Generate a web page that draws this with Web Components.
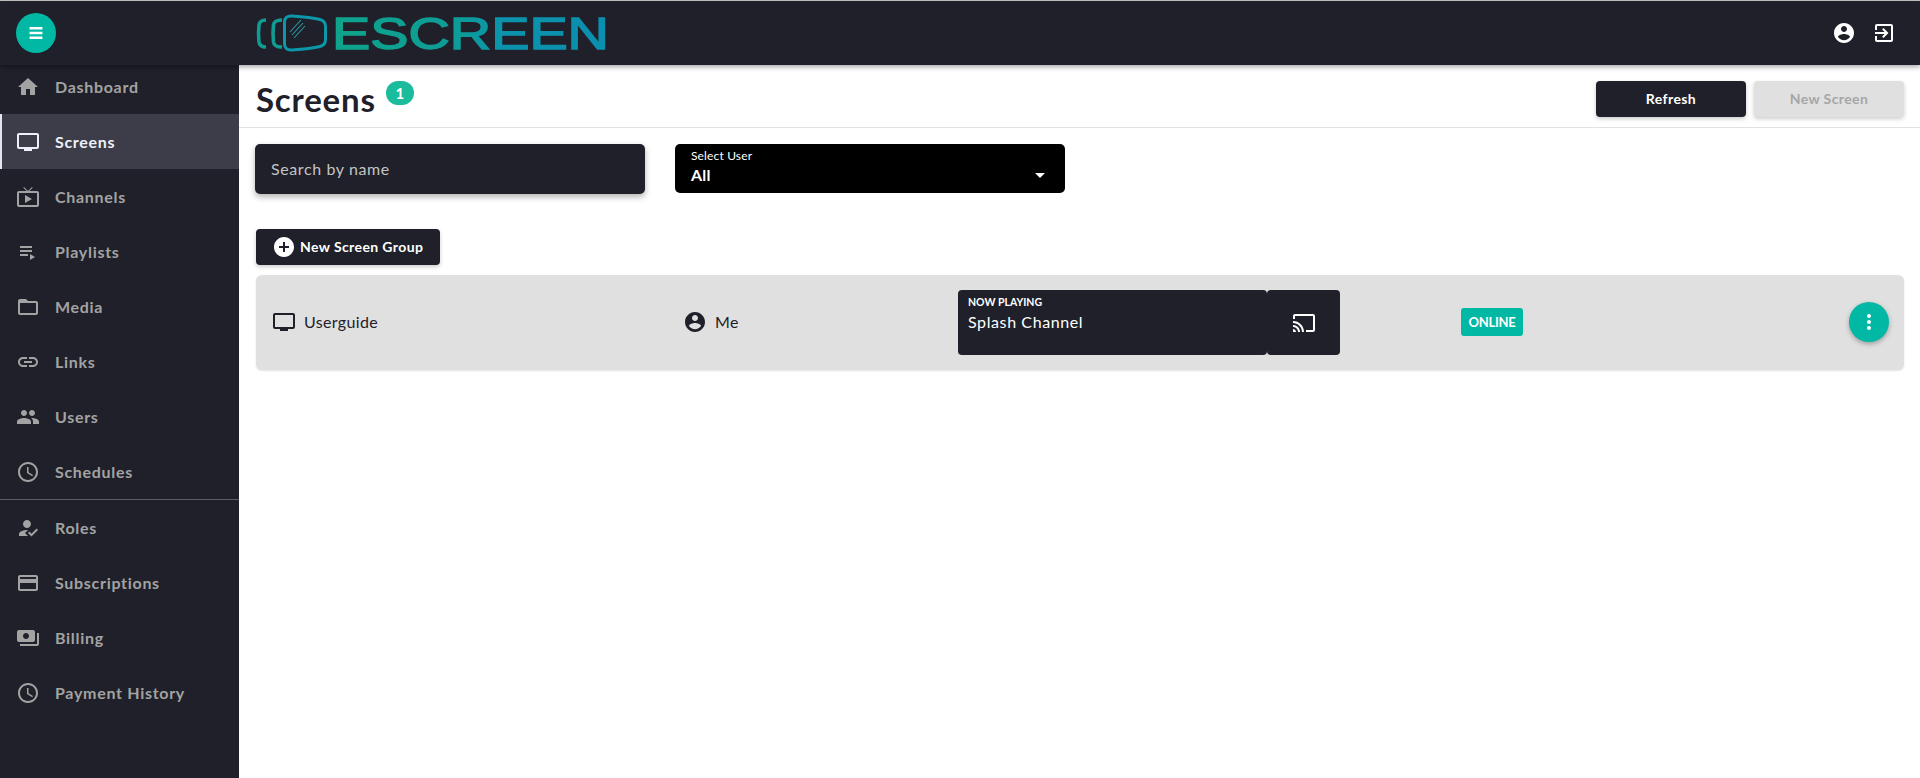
<!DOCTYPE html>
<html>
<head>
<meta charset="utf-8">
<title>Screens</title>
<style>
  html, body { margin: 0; height: 100%; background: #fff; overflow: hidden; }
  body { font-family: "Lato", "Liberation Sans", sans-serif; color: #1f2029; }
</style>
</head>
<body>
<es-app></es-app>

<script>
const ICONS = {
  home: "M10 20v-6h4v6h5v-8h3L12 3 2 12h3v8z",
  tv: "M21 3H3c-1.1 0-2 .9-2 2v12c0 1.1.9 2 2 2h5v2h8v-2h5c1.1 0 1.99-.9 1.99-2L23 5c0-1.1-.9-2-2-2zm0 14H3V5h18v12z",
  live: "M21 6h-7.59l3.29-3.29L16 2l-4 4-4-4-.71.71L10.59 6H3c-1.1 0-2 .89-2 2v12c0 1.1.9 2 2 2h18c1.1 0 2-.9 2-2V8c0-1.11-.9-2-2-2zm0 14H3V8h18v12zM9 10v8l7-4z",
  playlist: "M4 10h12v2H4zm0-4h12v2H4zm0 8h8v2H4zm10 0v6l5-3z",
  folder: "M20 6h-8l-2-2H4c-1.1 0-1.99.9-1.99 2L2 18c0 1.1.9 2 2 2h16c1.1 0 2-.9 2-2V8c0-1.1-.9-2-2-2zm0 12H4V8h16v10z",
  link: "M3.9 12c0-1.71 1.39-3.1 3.1-3.1h4V7H7c-2.76 0-5 2.24-5 5s2.24 5 5 5h4v-1.9H7c-1.71 0-3.1-1.39-3.1-3.1zM8 13h8v-2H8v2zm9-6h-4v1.9h4c1.71 0 3.1 1.39 3.1 3.1s-1.39 3.1-3.1 3.1h-4V17h4c2.76 0 5-2.24 5-5s-2.24-5-5-5z",
  people: "M16 11c1.66 0 2.99-1.34 2.99-3S17.66 5 16 5c-1.66 0-3 1.34-3 3s1.34 3 3 3zm-8 0c1.66 0 2.99-1.34 2.99-3S9.66 5 8 5C6.34 5 5 6.34 5 8s1.34 3 3 3zm0 2c-2.33 0-7 1.17-7 3.5V19h14v-2.5c0-2.33-4.67-3.5-7-3.5zm8 0c-.29 0-.62.02-.97.05 1.16.84 1.97 1.97 1.97 3.45V19h6v-2.5c0-2.33-4.67-3.5-7-3.5z",
  clock: "M11.99 2C6.47 2 2 6.48 2 12s4.47 10 9.99 10C17.52 22 22 17.52 22 12S17.52 2 11.99 2zM12 20c-4.42 0-8-3.58-8-8s3.58-8 8-8 8 3.58 8 8-3.58 8-8 8zm.5-13H11v6l5.25 3.15.75-1.23-4.5-2.67z",
  roles: "M9 17l3-2.94c-.39-.04-.68-.06-1-.06-2.67 0-8 1.34-8 4v2h9l-3-3zm2-5c2.21 0 4-1.79 4-4s-1.79-4-4-4-4 1.79-4 4 1.79 4 4 4m4.47 8.5L12 17l1.4-1.41 2.07 2.08 5.13-5.17 1.4 1.41z",
  card: "M20 4H4c-1.11 0-1.99.89-1.99 2L2 18c0 1.11.89 2 2 2h16c1.11 0 2-.89 2-2V6c0-1.11-.89-2-2-2zm0 14H4v-6h16v6zm0-10H4V6h16v2z",
  payments: "M19 14V6c0-1.1-.9-2-2-2H3c-1.1 0-2 .9-2 2v8c0 1.1.9 2 2 2h14c1.1 0 2-.9 2-2zm-9-1c-1.66 0-3-1.34-3-3s1.34-3 3-3 3 1.34 3 3-1.34 3-3 3zm13-6v11c0 1.1-.9 2-2 2H4v-2h17V7h2z",
  account: "M12 2C6.48 2 2 6.48 2 12s4.48 10 10 10 10-4.48 10-10S17.52 2 12 2zm0 3c1.66 0 3 1.34 3 3s-1.34 3-3 3-3-1.34-3-3 1.34-3 3-3zm0 14.2c-2.5 0-4.71-1.28-6-3.22.03-1.99 4-3.08 6-3.08 1.99 0 5.97 1.09 6 3.08-1.29 1.94-3.5 3.22-6 3.22z",
  exit: "M10.09 15.59L11.5 17l5-5-5-5-1.41 1.41L12.67 11H3v2h9.67l-2.58 2.59zM19 3H5c-1.11 0-2 .9-2 2v4h2V5h14v14H5v-4H3v4c0 1.1.89 2 2 2h14c1.1 0 2-.9 2-2V5c0-1.1-.9-2-2-2z",
  add: "M12 2C6.48 2 2 6.48 2 12s4.48 10 10 10 10-4.48 10-10S17.52 2 12 2zm5 11h-4v4h-2v-4H7v-2h4V7h2v4h4v2z",
  cast: "M21 3H3c-1.1 0-2 .9-2 2v3h2V5h18v14h-7v2h7c1.1 0 2-.9 2-2V5c0-1.1-.9-2-2-2zM1 18v3h3c0-1.66-1.34-3-3-3zm0-4v2c2.76 0 5 2.24 5 5h2c0-3.87-3.13-7-7-7zm0-4v2c4.97 0 9 4.03 9 9h2c0-6.08-4.93-11-11-11z",
  more: "M12 8c1.1 0 2-.9 2-2s-.9-2-2-2-2 .9-2 2 .9 2 2 2zm0 2c-1.1 0-2 .9-2 2s.9 2 2 2 2-.9 2-2-.9-2-2-2zm0 6c-1.1 0-2 .9-2 2s.9 2 2 2 2-.9 2-2-.9-2-2-2z",
  down: "M7 10l5 5 5-5z",
  bars: "M5 5.500h14v2.600H5zM5 10.700h14v2.600H5zM5 15.900h14v2.600H5z"
};

// small helper, every element gets its own open shadow root
function define(tag, css, html) {
  customElements.define(tag, class extends HTMLElement {
    constructor() {
      super();
      this.attachShadow({ mode: "open" });
    }
    connectedCallback() {
      let out = typeof html === "function" ? html(this) : html;
      this.shadowRoot.innerHTML = `<style>${css}</style>${out}`;
    }
  });
}

define("es-icon", `
  :host { display: inline-flex; width: var(--size, 24px); height: var(--size, 24px); flex: none; }
  svg { width: 100%; height: 100%; fill: currentColor; display: block; }
`, el => `<svg viewBox="0 0 24 24"><path d="${ICONS[el.getAttribute("name")]}"/></svg>`);

define("es-logo", `
  :host { display: block; width: 352px; height: 56px; }
  svg { display: block; }
  text { font-family: "Liberation Sans", sans-serif; font-weight: 400; font-size: 45px; }
`, `
  <svg width="352" height="56" viewBox="0 -8 352 56">
    <defs>
      <linearGradient id="g" x1="80" x2="352" y1="0" y2="0" gradientUnits="userSpaceOnUse">
        <stop offset="0" stop-color="#0fa38b"/><stop offset=".45" stop-color="#0d9c97"/><stop offset=".62" stop-color="#0b93ad"/><stop offset="1" stop-color="#0a8fae"/>
      </linearGradient>
    </defs>
    <path d="M10 7C5.500 7 3.500 8.500 3 12c-.6 5-.6 12 0 17 .5 3.500 2.500 5 7 5" fill="none" stroke="#109c92" stroke-width="3.600"/>
    <path d="M26 7c-6 0-8 1.500-8.500 5-.6 5-.6 12 0 17 .5 3.500 2.500 5 8.500 5" fill="none" stroke="#109c92" stroke-width="3.600"/>
    <path d="M36 3c12 .8 22 2 28 3.500 4 1 5.500 3 5.500 7v13c0 4-1.500 6-5.500 7-6 1.500-16 2.700-28 3.500-5 .3-7.500-2-7.500-6V9c0-4 2.500-6.300 7.500-6z" fill="none" stroke="#0d97ab" stroke-width="3"/>
    <path d="M34 19L45 7M36 22L47 10M38 25l11-12" stroke="#2a9ea6" stroke-width="1.100" fill="none"/>
    <text x="76" y="36" textLength="277" lengthAdjust="spacingAndGlyphs" fill="url(#g)" stroke="url(#g)" stroke-width="1.500">ESCREEN</text>
  </svg>
`);

define("es-header", `
  :host { display: flex; align-items: center; height: 64px; background: #1f2029; color: #fff; position: relative; z-index: 2;
    box-shadow: 0 2px 5px rgba(0,0,0,.35); flex: none; }
  .toggle { width: 40px; height: 40px; margin-left: 16px; border-radius: 50%; background: #00b8a3; color: #fff;
    display: flex; align-items: center; justify-content: center; --size: 22px; }
  es-logo { margin-left: 200px; }
  .actions { margin-left: auto; margin-right: 24px; display: flex; gap: 16px; }
`, `
  <div class="toggle"><es-icon name="bars"></es-icon></div>
  <es-logo></es-logo>
  <div class="actions"><es-icon name="account"></es-icon><es-icon name="exit"></es-icon></div>
`);

define("es-nav-item", `
  :host { display: flex; align-items: center; height: 55px; padding-left: 16px; gap: 15px; box-sizing: border-box;
    color: #a3a3a3; font-size: 16px; font-weight: 700; letter-spacing: .7px; }
  :host([active]) { background: #3c3d48; color: #eef0f8; border-left: 2px solid #e4e6f4; padding-left: 14px; }
`, el => `<es-icon name="${el.getAttribute("icon")}"></es-icon><slot></slot>`);

define("es-sidebar", `
  :host { display: block; width: 239px; background: #1f2029; flex: none; overflow: hidden; }
  .list { margin-top: -6px; }
  hr { margin: 0; border: 0; border-top: 1px solid #5a5b63; }
`, `
  <div class="list">
    <es-nav-item icon="home">Dashboard</es-nav-item>
    <es-nav-item icon="tv" active>Screens</es-nav-item>
    <es-nav-item icon="live">Channels</es-nav-item>
    <es-nav-item icon="playlist">Playlists</es-nav-item>
    <es-nav-item icon="folder">Media</es-nav-item>
    <es-nav-item icon="link">Links</es-nav-item>
    <es-nav-item icon="people">Users</es-nav-item>
    <es-nav-item icon="clock">Schedules</es-nav-item>
    <hr>
    <es-nav-item icon="roles">Roles</es-nav-item>
    <es-nav-item icon="card">Subscriptions</es-nav-item>
    <es-nav-item icon="payments">Billing</es-nav-item>
    <es-nav-item icon="clock">Payment History</es-nav-item>
  </div>
`);

define("es-button", `
  :host { display: inline-flex; align-items: center; justify-content: center; height: 36px; box-sizing: border-box; border-radius: 4px;
    background: #1f2029; color: #fff; font-size: 14px; font-weight: 700; letter-spacing: .4px; width: 150px;
    box-shadow: 0 2px 4px rgba(0,0,0,.2); }
  :host([disabled]) { background: #e0e0e0; color: #a6a6a6; }
  :host([icon]) { width: 184px; justify-content: flex-start; padding-left: 16px; gap: 4px; }
  es-icon { color: #fff; }
  span { margin-top: -1px; }
`, el => (el.getAttribute("icon") ? `<es-icon name="${el.getAttribute("icon")}"></es-icon>` : "") + `<span><slot></slot></span>`);

define("es-page-title", `
  :host { display: flex; align-items: center; height: 62px; box-sizing: content-box; border-bottom: 1px solid #e2e2e2;
    padding: 0 16px 0 17px; flex: none; }
  h1 { margin: 0; font-size: 33px; font-weight: 700; letter-spacing: .8px; color: #1f2029; line-height: 1; padding-top: 6px; }
  .count { width: 28px; height: 24px; border-radius: 12px; background: #1abc9c; color: #fff; font-size: 15px; font-weight: 700;
    display: flex; align-items: center; justify-content: center; margin: -6px 0 0 10px; }
  .buttons { margin-left: auto; margin-top: 6px; display: flex; gap: 8px; }
`, `
  <h1>Screens</h1><div class="count">1</div>
  <div class="buttons"><es-button>Refresh</es-button><es-button disabled>New Screen</es-button></div>
`);

define("es-search", `
  :host { display: flex; align-items: center; width: 390px; height: 50px; box-sizing: border-box; padding: 0 0 2px 16px; border-radius: 5px;
    background: #1f2029; color: #c4c4c4; font-size: 16px; letter-spacing: .6px; box-shadow: 0 3px 6px rgba(0,0,0,.3); }
`, `<slot></slot>`);

define("es-select", `
  :host { display: block; position: relative; width: 390px; height: 49px; box-sizing: border-box; padding: 4px 16px; border-radius: 5px;
    background: #000; color: #fff; }
  .label { font-size: 12px; line-height: 15px; letter-spacing: .15px; }
  .value { font-size: 16px; font-weight: 700; line-height: 20px; margin-top: 2px; letter-spacing: .2px; }
  es-icon { position: absolute; right: 13px; top: 19px; }
`, `
  <div class="label">Select User</div>
  <div class="value">All</div>
  <es-icon name="down"></es-icon>
`);

define("es-filters", `
  :host { display: flex; gap: 30px; margin: 16px 0 0 -1px; }
`, `<es-search>Search by name</es-search><es-select></es-select>`);

define("es-now-playing", `
  :host { display: flex; height: 65px; width: 382px; color: #fff; }
  .info { width: 309px; box-sizing: border-box; background: #1f2029; border-radius: 4px; padding: 5px 10px; }
  .tag { font-size: 10.5px; font-weight: 700; line-height: 14px; letter-spacing: 0; }
  .name { font-size: 16px; line-height: 20px; margin-top: 3px; letter-spacing: .6px; }
  .cast { flex: 1; background: #1f2029; border-radius: 4px; display: flex; align-items: center; justify-content: center; }
`, `
  <div class="info"><div class="tag">NOW PLAYING</div><div class="name">Splash Channel</div></div>
  <div class="cast"><es-icon name="cast"></es-icon></div>
`);

define("es-chip", `
  :host { display: inline-flex; align-items: center; justify-content: center; width: 62px; height: 28px; border-radius: 3px;
    background: #00b8a3; color: #fff; font-size: 13px; font-weight: 700; letter-spacing: -.3px; }
`, `<slot></slot>`);

define("es-screen-card", `
  :host { display: grid; grid-template-columns: 411px 275px 503px 1fr 40px; align-items: center; height: 94px; margin-top: 10px;
    padding: 0 15px 1px 16px; border-radius: 6px; background: #e0e0e0; color: #1f2029; font-size: 16px; letter-spacing: .35px;
    box-shadow: 0 1px 2px rgba(0,0,0,.12); }
  .cell { display: flex; align-items: center; gap: 8px; }
  .cell span { margin-top: -1px; }
  .playing { align-self: start; margin-top: 15px; }
  .fab { width: 40px; height: 40px; border-radius: 50%; background: #00b8a3; color: #fff; display: flex; align-items: center; justify-content: center;
    box-shadow: 0 2px 5px rgba(0,0,0,.3); }
`, `
  <div class="cell"><es-icon name="tv"></es-icon><span>Userguide</span></div>
  <div class="cell"><es-icon name="account"></es-icon><span>Me</span></div>
  <div class="playing"><es-now-playing></es-now-playing></div>
  <div><es-chip>ONLINE</es-chip></div>
  <div class="fab"><es-icon name="more"></es-icon></div>
`);

define("es-screens-page", `
  :host { display: flex; flex-direction: column; flex: 1; min-width: 0; }
  .body { padding: 0 16px 0 17px; }
  es-button { margin-top: 35px; display: flex; }
`, `
  <es-page-title></es-page-title>
  <div class="body">
    <es-filters></es-filters>
    <es-button icon="add">New Screen Group</es-button>
    <es-screen-card></es-screen-card>
  </div>
`);

define("es-app", `
  :host { display: flex; flex-direction: column; height: 778px; border-top: 1px solid #c9c9c9; box-sizing: border-box; }
  .row { display: flex; flex: 1; min-height: 0; }
`, `
  <es-header></es-header>
  <div class="row"><es-sidebar></es-sidebar><es-screens-page></es-screens-page></div>
`);
</script>
</body>
</html>
